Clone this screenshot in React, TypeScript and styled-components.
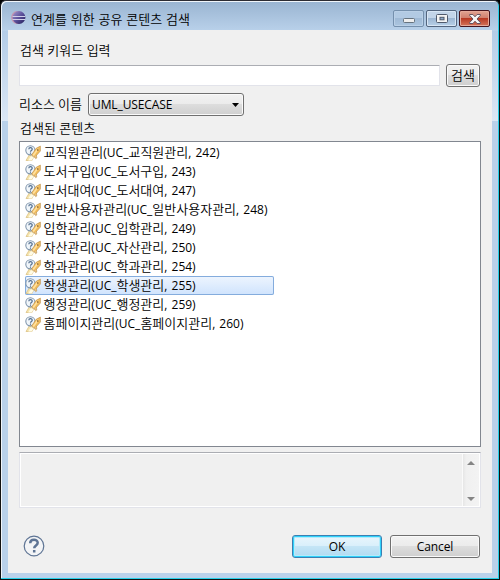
import React from "react";
import styled, { createGlobalStyle, css } from "styled-components";

const Global = createGlobalStyle`
  * { box-sizing: border-box; }
  html, body { margin: 0; padding: 0; background: #000; }
  body { width: 500px; height: 580px; overflow: hidden; }
`;

const Window = styled.div`
  width: 500px;
  height: 580px;
  padding: 0 6px 6px;
  display: flex;
  flex-direction: column;
  border: 1px solid #111;
  border-top-color: #2c2c33;
  border-radius: 6px 6px 0 0;
  background:
    linear-gradient(#99b4d1, #b9d1ea) 0 0 / 100% 30px no-repeat,
    linear-gradient(#b3cce7 0%, #dbe7f5 100%) 0 29px / 100% 91px no-repeat,
    #b9d1ea;
  box-shadow: inset -1px -1px 0 #25cfe8, inset 1px 1px 0 #f0f5fa;
  font: 12px/19px "Open Sans", "Noto Sans CJK KR", sans-serif;
  color: #000;
`;

const TitleBar = styled.header`
  height: 29px;
  flex: none;
  display: flex;
  padding: 0 3px 0 4px;
`;

const Logo = styled.svg`
  width: 15px;
  height: 15px;
  margin: 9px 5px 0 0;
`;

const Title = styled.h1`
  flex: 1;
  margin: 9px 0 0;
  font: inherit;
  word-spacing: 0.8px;
  white-space: nowrap;
`;

const Controls = styled.div`
  display: flex;
  gap: 2px;
  padding-top: 9px;
`;

const Control = styled.button<{ $kind: "min" | "max" | "close" }>`
  width: 31px;
  height: 17px;
  padding: 0;
  display: grid;
  place-items: center;
  border-radius: 2px;
  border: 1px solid #53657e;
  background: linear-gradient(#c3d5e9 0 48%, #9db7d3 50%, #b8d0e8);
  box-shadow: inset 0 0 0 1px #d8e6f5;
  ${(p) => p.$kind === "min" && css`
    border-color: #7590ad;
    background: linear-gradient(#b2cae3 0 48%, #a0bad6 50%, #aac5df);
    box-shadow: inset 0 0 0 1px #bad0e7;
  `}
  ${(p) => p.$kind === "close" && css`
    border-color: #45141d;
    background: linear-gradient(#e1a493 0, #cf7e6c 48%, #b83a24 50%, #d4745a);
    box-shadow: inset 0 0 0 1px #e5a999;
  `}
`;

const Body = styled.main`
  margin: 0 1px 0;
  flex: 1;
  min-height: 0;
  background: #f0f0f0;
  padding: 11px 11px 0;
  display: flex;
  flex-direction: column;
`;

const Label = styled.div`
  height: 19px;
  flex: none;
  padding-left: 1px;
  word-spacing: 0.4px;
  white-space: nowrap;
`;

const Hangul = styled.span`
  font-family: "Noto Sans CJK KR", sans-serif;
  font-size: 13px;
  line-height: 1;
  font-weight: 350;
`;

const Latin = styled.span`
  font-family: "Open Sans", "Noto Sans", sans-serif;
  letter-spacing: -0.1px;
`;

const SearchRow = styled.div`
  display: flex;
  gap: 6px;
  align-items: center;
  height: 23px;
  margin-top: 4px;
  flex: none;
`;

const Keyword = styled.input`
  width: 421px;
  height: 21px;
  padding: 0 4px;
  border: 1px solid #e2e3ea;
  border-top-color: #abadb3;
  border-radius: 1px;
  background: #fff;
  outline: none;
`;

const Button = styled.button<{ $width: number; $primary?: boolean }>`
  width: ${(p) => p.$width}px;
  height: 23px;
  padding: 0;
  display: flex;
  align-items: center;
  justify-content: center;
  border: 1px solid #707070;
  border-radius: 3px;
  font: inherit;
  color: #000;
  white-space: nowrap;
  background: linear-gradient(#f2f2f2, #ebebeb 49%, #dddddd 50%, #cfcfcf);
  box-shadow: inset 0 0 0 1px #fafafa;
  ${(p) => p.$primary && css`
    border-color: #3c7fb1;
    background: linear-gradient(#e9f5fc, #d9effb 49%, #c4e5f6 50%, #b0daf1);
    box-shadow: inset 0 0 0 1px #2fd1fb, inset 0 0 0 2px #b5ebfa;
  `}
`;

const ResourceRow = styled.div`
  display: flex;
  align-items: center;
  height: 23px;
  margin-top: 6px;
  flex: none;
`;

const ResourceLabel = styled.div`
  width: 69px;
  white-space: nowrap;
`;

const Select = styled.div`
  width: 156px;
  height: 23px;
  padding: 0 4px 0 3px;
  display: flex;
  align-items: center;
  justify-content: space-between;
  border: 1px solid #707070;
  border-radius: 3px;
  background: linear-gradient(#f2f2f2, #ebebeb 49%, #dddddd 50%, #cfcfcf);
  box-shadow: inset 0 0 0 1px #fafafa;
`;

const ListLabel = styled(Label)`
  margin-top: 3px;
`;

const List = styled.ul`
  width: 462px;
  height: 306px;
  margin: 3px 0 0;
  padding: 1px 5px;
  flex: none;
  list-style: none;
  background: #fff;
  border: 1px solid #828790;
`;

const Item = styled.li<{ $selected: boolean }>`
  width: 249px;
  height: 19px;
  display: flex;
  align-items: center;
  gap: 2.5px;
  white-space: nowrap;
  word-spacing: 1px;
  border-radius: 2px;
  ${Latin} {
    letter-spacing: 0;
  }
  ${(p) => p.$selected && css`
    background: linear-gradient(#eef5fe, #cfe3fd);
    box-shadow: inset 0 0 0 1px #84acdd;
  `}
`;

const Details = styled.div`
  width: 462px;
  height: 56px;
  margin-top: 5px;
  flex: none;
  display: flex;
  justify-content: flex-end;
  border: 1px solid #e2e3ea;
  border-top-color: #abadb3;
  box-shadow: inset 0 0 0 1px #fff;
  padding: 1px;
`;

const Scrollbar = styled.div`
  width: 17px;
  display: flex;
  flex-direction: column;
  justify-content: space-between;
  align-items: center;
  padding: 7px 0 5px;
  background: linear-gradient(90deg, #e6e6e6, #f0f0f0 20%, #f3f3f3);
  border-left: 1px solid #fafafa;
`;

const Footer = styled.footer`
  display: flex;
  align-items: center;
  margin-top: 26px;
  padding-left: 4px;
  height: 24px;
  width: 461px;
`;

const HelpIcon = styled.svg`
  width: 22px;
  height: 22px;
  margin-top: -1px;
`;

const Actions = styled.div`
  margin-left: auto;
  display: flex;
  gap: 8px;
`;

/* Hangul and Latin runs are set in their own faces and sizes. */
const Mixed = ({ text }: { text: string }) => (
  <span>
    {text.split(/([가-힣]+)/).filter(Boolean).map((run, i) =>
      /[가-힣]/.test(run) ? <Hangul key={i}>{run}</Hangul> : <Latin key={i}>{run}</Latin>
    )}
  </span>
);

const UseCaseIcon = () => (
  <svg width="16" height="16" viewBox="0 0 16 16">
    <path d="M4.5 9.5 1 15.5h6l1.5-3.2Z" fill="#f6e4ac" stroke="#d9bc78" strokeWidth=".7" />
    <path d="M3.2 15.5 6 11l2.5 1.5-1.7 3Z" fill="#fffbe5" />
    <circle cx="5.4" cy="5.3" r="4.6" fill="#f1f6fa" stroke="#8196ad" strokeWidth="1.1" />
    <path d="M3.8 4.3c0-2.2 3.4-2.2 3.4-.1 0 1.3-1.7 1.2-1.7 2.5M5.5 7.6v1.1" fill="none" stroke="#536f90" strokeWidth="1.2" />
    <path d="m6.6 9.9 4.6-6.6 4.2-2.2v4.9l-5.6 6.3Z" fill="#f2bd5c" stroke="#b98a45" strokeWidth=".6" />
    <path d="m7.5 10 4.9-6.5 1.5.5-5 6.9Z" fill="#ffe1a0" />
    <path d="M12 4.2h1.5v1.5H12z" fill="#936629" />
    <path d="m9.5 11.6 1.2 2.1 1.1-.8-.4-2.8" fill="#edc57d" stroke="#b99055" strokeWidth=".6" />
  </svg>
);

const items: [string, number][] = [
  ["교직원관리", 242],
  ["도서구입", 243],
  ["도서대여", 247],
  ["일반사용자관리", 248],
  ["입학관리", 249],
  ["자산관리", 250],
  ["학과관리", 254],
  ["학생관리", 255],
  ["행정관리", 259],
  ["홈페이지관리", 260],
];

export default function App() {
  return (
    <>
      <Global />
      <Window>
        <TitleBar>
          <Logo viewBox="0 0 15 15">
            <defs>
              <linearGradient id="orb" x1="0" y1="0" x2="1" y2="1">
                <stop offset="0" stopColor="#a99bd0" />
                <stop offset=".5" stopColor="#5b509b" />
                <stop offset="1" stopColor="#211d56" />
              </linearGradient>
            </defs>
            <ellipse cx="6.2" cy="7.5" rx="6" ry="6.4" fill="#c493ad" />
            <circle cx="8" cy="7.5" r="6.4" fill="url(#orb)" />
            <path d="M1.5 6.5h12.7M1.5 9.5h12.7" stroke="#d2d0ea" strokeWidth="1" />
          </Logo>
          <Title><Mixed text="연계를 위한 공유 콘텐츠 검색" /></Title>
          <Controls>
            <Control $kind="min" aria-label="Minimize">
              <svg width="12" height="13" viewBox="0 0 12 13"><rect x=".5" y="6.5" width="11" height="4" rx="1" fill="#eee" stroke="#66737f" /></svg>
            </Control>
            <Control $kind="max" aria-label="Maximize">
              <svg width="12" height="9" viewBox="0 0 12 9"><rect x=".5" y=".5" width="11" height="8" rx="1" fill="#f4f4f4" stroke="#505a6c" /><rect x="4" y="3.3" width="4" height="2.5" fill="#8eaaca" stroke="#505a6c" /></svg>
            </Control>
            <Control $kind="close" aria-label="Close">
              <svg width="12" height="10" viewBox="0 0 12 10"><path d="M.7.5h3.2L6 2.8 8.1.5h3.2v1L8 5l3.3 3.5v1H8.1L6 7.2 3.9 9.5H.7v-1L4 5 .7 1.5Z" fill="#f7f7f7" stroke="#594b58" strokeWidth=".9" /></svg>
            </Control>
          </Controls>
        </TitleBar>
        <Body>
          <Label><Mixed text="검색 키워드 입력" /></Label>
          <SearchRow>
            <Keyword aria-label="검색 키워드 입력" />
            <Button $width={34}><Mixed text="검색" /></Button>
          </SearchRow>
          <ResourceRow>
            <ResourceLabel><Mixed text="리소스 이름" /></ResourceLabel>
            <Select>
              <Latin>UML_USECASE</Latin>
              <svg width="7" height="4" viewBox="0 0 7 4"><path d="M0 0h7L3.5 4Z" /></svg>
            </Select>
          </ResourceRow>
          <ListLabel><Mixed text="검색된 콘텐츠" /></ListLabel>
          <List>
            {items.map(([name, no]) => (
              <Item key={no} $selected={no === 255}>
                <UseCaseIcon />
                <Mixed text={`${name}(UC_${name}, ${no})`} />
              </Item>
            ))}
          </List>
          <Details>
            <Scrollbar>
              <svg width="8" height="4" viewBox="0 0 8 4"><path d="M0 4h8L4 0Z" fill="#858585" /></svg>
              <svg width="8" height="4" viewBox="0 0 8 4"><path d="M0 0h8L4 4Z" fill="#858585" /></svg>
            </Scrollbar>
          </Details>
          <Footer>
            <HelpIcon viewBox="0 0 22 22">
              <circle cx="11" cy="11" r="9.8" fill="#f3f4f6" stroke="#5e7494" strokeWidth="1.2" />
              <path d="M7.2 8.2c0-4.6 7.5-4.4 7.5-.5 0 2.8-3.5 2.6-3.5 5.6M11.2 15v2.6" fill="none" stroke="#5e7494" strokeWidth="2.5" />
            </HelpIcon>
            <Actions>
              <Button $width={90} $primary><Latin>OK</Latin></Button>
              <Button $width={90}><Latin>Cancel</Latin></Button>
            </Actions>
          </Footer>
        </Body>
      </Window>
    </>
  );
}
